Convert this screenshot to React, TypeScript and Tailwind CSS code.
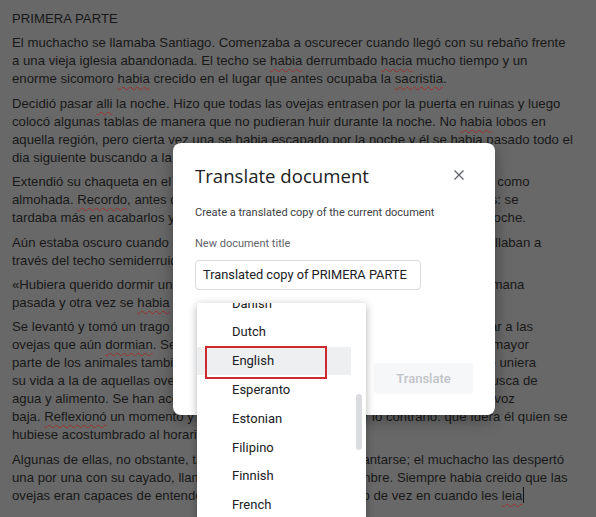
import React from "react";

const paragraphs: string[][] = [
  ["PRIMERA PARTE"],
  [
    "El muchacho se llamaba Santiago. Comenzaba a oscurecer cuando llegó con su rebaño frente",
    "a una vieja iglesia abandonada. El techo se {habia} derrumbado {hacia} mucho tiempo y un",
    "enorme sicomoro {habia} crecido en el lugar que antes ocupaba la {sacristia}.",
  ],
  [
    "Decidió pasar {alli} la noche. Hizo que todas las ovejas entrasen por la puerta en ruinas y luego",
    "colocó algunas tablas de manera que no pudieran huir durante la noche. No {habia} lobos en",
    "aquella región, pero cierta vez una se habia escapado por la noche y él se habia pasado todo el",
    "dia siguiente buscando a la oveja descarriada.",
  ],
  [
    "Extendió su chaqueta en el suelo y se acostó, usando el libro que acababa de leer como",
    "almohada. {Recordo}, antes de dormir, que debía empezar a leer libros más gruesos: se",
    "tardaba más en acabarlos y eran almohadas mucho más confortables durante la noche.",
  ],
  [
    "Aún estaba oscuro cuando se despertó. Miró hacia arriba y vio las estrellas que brillaban a",
    "través del techo semiderruido.",
  ],
  [
    "«Hubiera querido dormir un poco más», pensó. Había tenido aquel sueño de la semana",
    "pasada y otra vez se {habia} despertado antes del final.",
  ],
  [
    "Se levantó y tomó un trago de vino. Después cogió el cayado y empezó a despertar a las",
    "ovejas que aún {dormian}. Se había dado cuenta de que, cuando se despertaba, la mayor",
    "parte de los animales también se despertaba. Como si hubiera alguna energía que uniera",
    "su vida a la de aquellas ovejas que durante dos años recorren con él la tierra en busca de",
    "agua y alimento. Se han acostumbrado tanto a mí que saben mis horarios, dijo en voz",
    "baja. {Reflexionó} un momento y pensó que también podía ser lo contrario: que fuera él quien se",
    "hubiese acostumbrado al horario de las ovejas.",
  ],
  [
    "Algunas de ellas, no obstante, tardaban un poco más en levantarse; el muchacho las despertó",
    "una por una con su cayado, llamando a cada una por su nombre. Siempre habia creido que las",
    "ovejas eran capaces de entender lo que él les decía. Por eso de vez en cuando les {leia}|",
  ],
];

function Line({ text }: { text: string }) {
  const parts = text.split(/(\{[^}]+\}|\|)/).filter((p) => p.length > 0);
  return (
    <div className="whitespace-nowrap h-[18px]">
      {parts.map((p, i) => {
        if (p === "|") {
          return (
            <span
              key={i}
              className="inline-block w-px h-[16px] bg-[#111] align-[-3px] ml-px"
            />
          );
        }
        if (p.startsWith("{")) {
          return (
            <span
              key={i}
              className="underline decoration-wavy decoration-[#9c2f2f] decoration-1 underline-offset-[3px]"
            >
              {p.slice(1, -1)}
            </span>
          );
        }
        return <span key={i}>{p}</span>;
      })}
    </div>
  );
}

const languages = [
  "Danish",
  "Dutch",
  "English",
  "Esperanto",
  "Estonian",
  "Filipino",
  "Finnish",
  "French",
  "Frisian",
];

export default function App() {
  return (
    <div
      className="relative w-[596px] h-[517px] overflow-hidden bg-[#686868]"
      style={{ fontFamily: "Roboto, 'Liberation Sans', sans-serif" }}
    >
      {/* Document text (under overlay) */}
      <div
        className="pt-[10px] pl-[12px] text-[13.2px] leading-[18px] text-[#181818] flex flex-col gap-[6.4px]"
        style={{ fontFamily: "'Liberation Sans', Arial, sans-serif" }}
      >
        {paragraphs.map((para, i) => (
          <div key={i}>
            {para.map((l, j) => (
              <Line key={j} text={l} />
            ))}
          </div>
        ))}
      </div>

      {/* Dialog */}
      <div className="absolute left-[173px] top-[143px] w-[322px] h-[272px] bg-white rounded-[8px] shadow-[0_4px_16px_rgba(0,0,0,0.35)] flex flex-col">
        <div className="flex items-center justify-between pl-[22px] pr-[31px] pt-[21px]">
          <div
            className="text-[18.6px] leading-[24px] text-[#202124]"
            style={{ fontFamily: "'Open Sans', Roboto, sans-serif" }}
          >
            Translate document
          </div>
          <svg width="10" height="10" viewBox="0 0 10 10" className="mt-[-2px]">
            <path
              d="M0.5 0.5 L9.5 9.5 M9.5 0.5 L0.5 9.5"
              stroke="#5f6368"
              strokeWidth="1.3"
              fill="none"
            />
          </svg>
        </div>
        <div className="pl-[22px] mt-[18px] text-[11px] leading-[14px] text-[#3c4043]">
          Create a translated copy of the current document
        </div>
        <div className="pl-[22px] mt-[17px] text-[11px] leading-[14px] text-[#5f6368]">
          New document title
        </div>
        <div className="ml-[22px] mt-[9px] w-[226px] h-[30px] border border-[#dadce0] rounded-[4px] flex items-center pl-[7px] text-[12.8px] text-[#202124]">
          Translated copy of PRIMERA PARTE
        </div>
        <div className="mt-auto flex justify-end pr-[22px] pb-[21px]">
          <div className="w-[99px] h-[31px] rounded-[4px] bg-[#f6f7f8] flex items-center justify-center text-[13px] font-medium text-[#bfc3c8]">
            Translate
          </div>
        </div>
      </div>

      {/* Language dropdown */}
      <div className="absolute left-[197px] top-[303px] w-[169px] h-[230px] bg-white rounded-[3px] shadow-[0_2px_8px_rgba(0,0,0,0.3)] overflow-hidden flex">
        <div className="w-[154px] mt-[-14px] flex flex-col">
          {languages.map((lang) => (
            <div
              key={lang}
              className={
                "h-[28.8px] shrink-0 flex items-center pl-[35px] text-[13px] text-[#202124] " +
                (lang === "English" ? "bg-[#eeeff1]" : "")
              }
            >
              {lang}
            </div>
          ))}
        </div>
        <div className="w-[15px] flex flex-col">
          <div className="ml-[5px] mt-[91px] w-[6px] h-[56px] rounded-full bg-[#dadce0]" />
        </div>
      </div>

      {/* Red annotation box */}
      <div className="absolute left-[205px] top-[346px] w-[122px] h-[33px] border-2 border-[#cc2a2f]" />
    </div>
  );
}
